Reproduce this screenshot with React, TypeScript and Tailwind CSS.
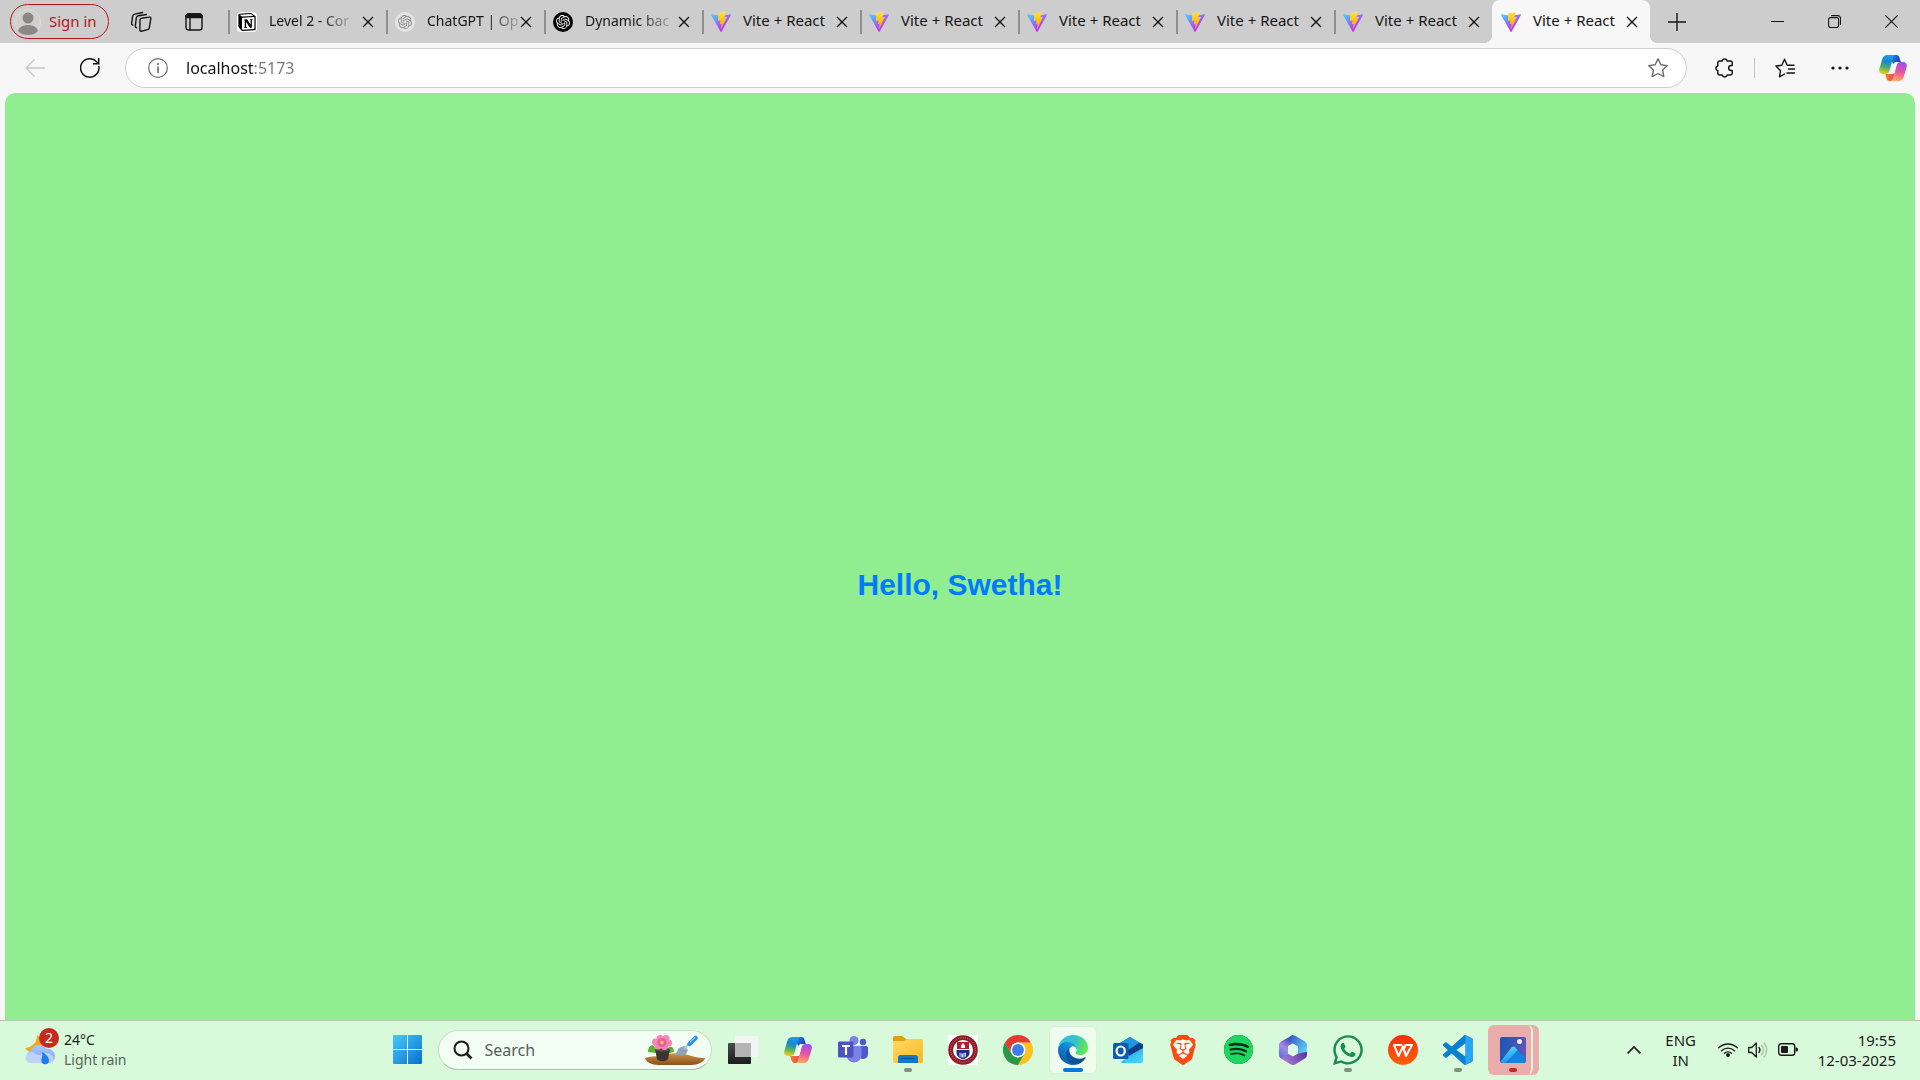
import type { ReactNode } from "react";
import { SiBrave, SiNotion, SiOpenai, SiSpotify } from "react-icons/si";
import { FaWhatsapp } from "react-icons/fa";

function ViteLogo() {
  return (
    <svg viewBox="0 0 256 257" className="size-5 shrink-0" aria-hidden="true">
      <defs>
        <linearGradient id="viteBody" x1="0" x2="0.58" y1="0.08" y2="0.78">
          <stop offset="0" stopColor="#41D1FF" />
          <stop offset="1" stopColor="#BD34FE" />
        </linearGradient>
        <linearGradient id="viteBolt" x1="0.43" x2="0.5" y1="0.02" y2="0.89">
          <stop offset="0" stopColor="#FFEA83" />
          <stop offset="0.08" stopColor="#FFDD35" />
          <stop offset="1" stopColor="#FFA800" />
        </linearGradient>
      </defs>
      <path
        fill="url(#viteBody)"
        d="M255.153 37.938L134.897 252.976c-2.483 4.44-8.862 4.466-11.382.048L.875 37.958c-2.746-4.814 1.371-10.646 6.827-9.67l120.385 21.517a6.537 6.537 0 0 0 2.322-.004l117.867-21.483c5.438-.991 9.574 4.796 6.877 9.62Z"
      />
      <path
        fill="url(#viteBolt)"
        d="M185.432.063L96.44 17.501a3.268 3.268 0 0 0-2.634 3.014l-5.474 92.456a3.268 3.268 0 0 0 3.997 3.378l24.777-5.718c2.318-.535 4.413 1.507 3.936 3.838l-7.361 36.047c-.495 2.426 1.782 4.5 4.151 3.78l15.304-4.649c2.372-.72 4.652 1.36 4.15 3.788l-11.698 56.621c-.732 3.542 3.979 5.473 5.943 2.437l1.313-2.028l72.516-144.72c1.215-2.423-.88-5.186-3.54-4.672l-25.505 4.922c-2.396.462-4.435-1.77-3.759-4.114l16.646-57.705c.677-2.35-1.37-4.583-3.769-4.113Z"
      />
    </svg>
  );
}

function NotionLogo() {
  return (
    <span className="grid size-5 shrink-0 place-items-center rounded-sm bg-white">
      <SiNotion className="size-[18px] text-black" />
    </span>
  );
}

function ChatLogo({ dark }: { dark: boolean }) {
  return dark ? (
    <span className="grid size-5 shrink-0 place-items-center rounded-full bg-black">
      <SiOpenai className="size-[14px] text-white" />
    </span>
  ) : (
    <span className="grid size-5 shrink-0 place-items-center rounded-full bg-[#e4e4e4]">
      <SiOpenai className="size-[14px] text-[#8a8a8a]" />
    </span>
  );
}

function CloseGlyph() {
  return (
    <svg viewBox="0 0 12 12" className="size-3" fill="none" stroke="#111" strokeWidth="1.4" aria-hidden="true">
      <path d="M1 1l10 10M11 1L1 11" />
    </svg>
  );
}

function CopilotLogo() {
  return (
    <svg viewBox="0 0 28 26" className="h-[26px] w-7" aria-hidden="true">
      <defs>
        <linearGradient id="cpLeft" x1="0.5" x2="0.3" y1="0" y2="1">
          <stop offset="0" stopColor="#1b9cf0" />
          <stop offset="0.35" stopColor="#1787cf" />
          <stop offset="0.65" stopColor="#4fae68" />
          <stop offset="1" stopColor="#f5cf0c" />
        </linearGradient>
        <linearGradient id="cpRight" x1="0.6" x2="0.4" y1="0" y2="1">
          <stop offset="0" stopColor="#9b4ff0" />
          <stop offset="0.5" stopColor="#e8559d" />
          <stop offset="1" stopColor="#ffa964" />
        </linearGradient>
        <linearGradient id="cpTop" x1="0" x2="1" y1="0" y2="0.6">
          <stop offset="0" stopColor="#1a8ff0" />
          <stop offset="1" stopColor="#1d3fb8" />
        </linearGradient>
        <linearGradient id="cpBottom" x1="0" x2="1">
          <stop offset="0" stopColor="#f5802c" />
          <stop offset="1" stopColor="#e9484e" />
        </linearGradient>
      </defs>
      <path fill="url(#cpTop)" d="M12 0h5.500c1.700 0 2.500 1 3 2.700L21.800 7H18c-1.800 0-2.600.6-3.200 2L12 6z" />
      <path fill="url(#cpBottom)" d="M16 26h-5.500c-1.700 0-2.500-1-3-2.700L6.200 19H10c1.800 0 2.600-.6 3.200-2L16 20z" />
      <path fill="url(#cpLeft)" d="M8.500 0H17c-1.600 0-2.400 1-3 3l-3.500 12.500C9.800 18 8.800 19 6.500 19H4C1 19-.4 17 .3 14L3.300 4C4 1.500 6 0 8.500 0Z" />
      <path fill="url(#cpRight)" d="M19.500 26H11c1.600 0 2.400-1 3-3l3.500-12.500C18.200 8 19.200 7 21.500 7H24c3 0 4.400 2 3.700 5l-3 10c-.7 2.500-2.700 4-5.200 4Z" />
      <path fill="#f7fbf7" d="M14.800 9c.6-1.500 1.500-2 3.500-2h1.700c-1.300.4-2 1.500-2.500 3.300L15.700 17c-.5 1.500-1.300 2-3 2H9.500c1.500-.3 2.200-1.300 2.700-3z" />
    </svg>
  );
}

function EdgeLogo() {
  return (
    <svg viewBox="0 0 256 256" className="size-[30px]" aria-hidden="true">
      <defs>
        <linearGradient id="edgeA" x1="0" x2="1" y1="0.6" y2="0.6">
          <stop offset="0" stopColor="#0c59a4" />
          <stop offset="1" stopColor="#114a8b" />
        </linearGradient>
        <linearGradient id="edgeB" x1="0.8" x2="0.3" y1="0.2" y2="0.95">
          <stop offset="0" stopColor="#1b9de2" />
          <stop offset="0.5" stopColor="#0f78c8" />
          <stop offset="1" stopColor="#0a5aa8" />
        </linearGradient>
        <linearGradient id="edgeC" x1="0" x2="1" y1="0.3" y2="0.6">
          <stop offset="0" stopColor="#35c1f1" />
          <stop offset="0.5" stopColor="#34c1c8" />
          <stop offset="1" stopColor="#66eb4a" />
        </linearGradient>
      </defs>
      <g transform="translate(-4.630 -4.920)">
        <path fill="url(#edgeA)" d="M235.68 195.46a93.73 93.73 0 0 1-10.54 4.71 101.87 101.87 0 0 1-35.9 6.46c-47.32 0-88.54-32.55-88.54-74.32A31.48 31.48 0 0 1 117.13 105c-42.8 1.8-53.8 46.4-53.8 72.53 0 73.88 68.09 81.37 82.76 81.37 7.91 0 19.84-2.300 27-4.560l1.310-.44a128.34 128.34 0 0 0 66.6-52.8 4 4 0 0 0-5.320-5.640z" />
        <path fill="url(#edgeB)" d="M110.34 246.34A79.2 79.2 0 0 1 87.6 225a80.72 80.72 0 0 1 29.53-120c3.120-1.470 8.450-4.130 15.54-4a32.35 32.35 0 0 1 25.69 13 31.88 31.88 0 0 1 6.360 18.66c0-.21 24.46-79.6-80-79.6-43.9 0-80 41.66-80 78.21a130.15 130.15 0 0 0 12.11 56 128 128 0 0 0 156.38 67.11 75.55 75.55 0 0 1-62.78-8z" />
        <path fill="url(#edgeC)" d="M156.94 153.78c-.81 1.050-3.300 2.500-3.300 5.660 0 2.610 1.700 5.120 4.720 7.230 14.38 10 41.49 8.680 41.56 8.680a59.56 59.56 0 0 0 30.27-8.350 61.38 61.38 0 0 0 30.43-52.88c.26-22.41-8-37.31-11.34-43.91C228.09 28.76 182.35 4.920 132.61 4.920a128 128 0 0 0-128 126.2c.48-36.54 36.8-66.05 80-66.05 3.500 0 23.46.34 42 10.07 16.34 8.580 24.9 18.94 30.85 29.21 6.180 10.67 7.280 24.15 7.280 29.52s-2.740 13.33-7.800 19.91z" />
      </g>
    </svg>
  );
}

function TaskViewLogo() {
  return (
    <svg viewBox="0 0 30 28" className="h-7 w-[30px]" aria-hidden="true">
      <defs>
        <linearGradient id="tvDark" x1="0" x2="0" y1="0" y2="1">
          <stop offset="0" stopColor="#4a4a4a" />
          <stop offset="1" stopColor="#1c1c1c" />
        </linearGradient>
      </defs>
      <rect x="0" y="7" width="23" height="21" rx="1" fill="url(#tvDark)" />
      <rect x="7" y="0" width="23" height="21" rx="1" fill="#f4f4f4" opacity="0.95" />
      <path d="M7 7h16v14H8a1 1 0 0 1-1-1z" fill="#b4b4b4" />
    </svg>
  );
}

function TeamsLogo() {
  return (
    <svg viewBox="0 0 30 27" className="h-[27px] w-[30px]" aria-hidden="true">
      <circle cx="25" cy="6" r="3.200" fill="#5059c9" />
      <path d="M20 10h8.500A1.500 1.500 0 0 1 30 11.500v6.500a5 5 0 0 1-9 3z" fill="#5059c9" />
      <circle cx="16" cy="4.500" r="4.500" fill="#7b83eb" />
      <path d="M9 10h13a1.500 1.500 0 0 1 1.500 1.500V19a7.500 7.500 0 0 1-15 0z" fill="#7b83eb" />
      <rect y="5.500" width="15.500" height="16" rx="1.500" fill="#4b53bc" />
      <path d="M4 9h8v2H9.100v8H6.900v-8H4z" fill="#fff" />
    </svg>
  );
}

function FolderLogo() {
  return (
    <svg viewBox="0 0 30 27" className="h-[27px] w-[30px]" aria-hidden="true">
      <defs>
        <linearGradient id="folder" x1="0" x2="1" y1="0" y2="1">
          <stop offset="0" stopColor="#ffd968" />
          <stop offset="1" stopColor="#fbb91e" />
        </linearGradient>
      </defs>
      <path d="M0 1.500A1.500 1.500 0 0 1 1.500 0H9l4 3h15v7H0z" fill="#e0a10c" />
      <path d="M0 5h11l3-2h14.500A1.500 1.500 0 0 1 30 4.500v21a1.500 1.500 0 0 1-1.500 1.500h-27A1.500 1.500 0 0 1 0 25.500z" fill="url(#folder)" />
      <path d="M5 27v-5.500A2.500 2.500 0 0 1 7.500 19h15a2.500 2.500 0 0 1 2.500 2.500V27z" fill="#1379cf" />
      <path d="M8.500 22.500h13" stroke="#0b4f91" strokeWidth="1.200" />
    </svg>
  );
}

function CollegeLogo() {
  return (
    <svg viewBox="0 0 30 30" className="size-[30px]" aria-hidden="true">
      <rect width="30" height="30" fill="#fff" />
      <circle cx="15" cy="15" r="14.800" fill="#8e1b25" />
      <circle cx="15" cy="15" r="12.300" fill="none" stroke="#c98388" strokeWidth="1" strokeDasharray="1 1.200" />
      <circle cx="15" cy="15" r="10" fill="#fff" />
      <path d="M9 7h12v8H9z" fill="#b3202c" />
      <path d="M8.500 15h13v3c0 3.500-3.500 5-6.500 6.500-3-1.500-6.500-3-6.500-6.500z" fill="#1f2b87" />
      <path d="M15 8l2 2.500v2.500h-4v-2.500z" fill="#fff" />
      <path d="M8 14h14v1H8z" fill="#fff" />
      <path d="M11.500 17.500l3 1 3.500-1v4l-3.200 1.200-3.300-1.200z" fill="#fff" opacity="0.800" />
      <path d="M13 18v4M16 18.500v4" stroke="#1f2b87" strokeWidth="0.800" />
    </svg>
  );
}

function ChromeLogo() {
  return (
    <svg viewBox="0 0 48 48" className="size-[30px]" aria-hidden="true">
      <path d="M24 12h20.785A24 24 0 0 1 24 48l10.392-18z" fill="#fcc31e" />
      <path d="M3.215 12A24 24 0 0 0 24 48l10.392-18H24L13.608 30z" fill="#2a9947" />
      <path d="M3.215 12A24 24 0 0 1 44.785 12H24A12 12 0 0 0 13.608 18l-4 4z" fill="#e33b2e" />
      <path d="M3.215 12L13.608 30 20 20z" fill="#e33b2e" />
      <circle cx="24" cy="24" r="12" fill="#fff" />
      <circle cx="24" cy="24" r="9.500" fill="#3f7ee8" />
    </svg>
  );
}

function OutlookLogo() {
  return (
    <svg viewBox="0 0 30 26" className="h-[26px] w-[30px]" aria-hidden="true">
      <defs>
        <linearGradient id="olFront" x1="0" x2="1" y1="0" y2="1">
          <stop offset="0" stopColor="#1a8fe0" />
          <stop offset="1" stopColor="#4fe0fb" />
        </linearGradient>
      </defs>
      <path d="M5 7L16 .4a2 2 0 0 1 2 0L29 7v5l-12 7L5 12z" fill="#0f6cc4" />
      <path d="M8 6l9-5.600L28.500 7 17 13z" fill="#2295e3" />
      <path d="M29.500 7.500L12 19v-4L26 6z" fill="#0a3f86" />
      <path d="M30 9v14.500a2.500 2.500 0 0 1-2.500 2.500H10a3 3 0 0 1-2-1z" fill="url(#olFront)" />
      <path d="M12 20l18 4a2.500 2.500 0 0 1-2.500 2H12z" fill="#3fd0f5" opacity="0.700" />
      <path d="M30 7.500v3.500L15.500 19v-4L26.500 6z" fill="#0a3f86" />
      <rect y="6" width="15.500" height="16" rx="1.500" fill="#0d5cad" />
      <ellipse cx="7.700" cy="14" rx="4.100" ry="4.500" fill="none" stroke="#fff" strokeWidth="2.200" />
    </svg>
  );
}

function BraveLogo() {
  return (
    <span className="grid size-[30px] place-items-center">
      <span className="col-start-1 row-start-1 h-5 w-4 rounded-lg bg-white" />
      <SiBrave className="col-start-1 row-start-1 size-[30px] text-[#fb4a14]" />
    </span>
  );
}

function SpotifyLogo() {
  return (
    <span className="grid size-[29px] place-items-center rounded-full bg-[#0c2b16]">
      <SiSpotify className="size-[29px] text-[#1ed760]" />
    </span>
  );
}

function OfficeLogo() {
  return (
    <svg viewBox="0 0 28 30" className="h-[30px] w-7" aria-hidden="true">
      <defs>
        <linearGradient id="m365a" x1="0.6" x2="0.2" y1="0" y2="1">
          <stop offset="0" stopColor="#3a3fb0" />
          <stop offset="0.5" stopColor="#a48ce8" />
          <stop offset="1" stopColor="#5a66d8" />
        </linearGradient>
        <linearGradient id="m365b" x1="0" x2="1" y1="0" y2="0.7">
          <stop offset="0" stopColor="#2f4fc0" />
          <stop offset="1" stopColor="#5ed0fa" />
        </linearGradient>
        <linearGradient id="m365c" x1="0" x2="1" y1="0.6" y2="0.2">
          <stop offset="0" stopColor="#b07fdc" />
          <stop offset="1" stopColor="#58369c" />
        </linearGradient>
      </defs>
      <path d="M14 0L2 6.500A4 4 0 0 0 0 10v10a4 4 0 0 0 2 3.500l4 2 3-6.500V11l5-3z" fill="url(#m365a)" />
      <path d="M11 1.200a6 6 0 0 1 6 0L26 6.500A4 4 0 0 1 28 10v10l-9-1.500V11.500L9.500 6z" fill="url(#m365b)" />
      <path d="M28 17v3a4 4 0 0 1-2 3.500l-9.500 5.800a5 5 0 0 1-5 0L2 23.500l7.500-4.500 4.500 2.500 5-3z" fill="url(#m365c)" />
      <circle cx="14" cy="15" r="5" fill="#dcfade" />
    </svg>
  );
}

function WpsLogo() {
  return (
    <svg viewBox="0 0 30 30" className="size-[30px]" aria-hidden="true">
      <defs>
        <linearGradient id="wps" x1="0" x2="0" y1="0" y2="1">
          <stop offset="0" stopColor="#fb2a12" />
          <stop offset="1" stopColor="#ff6208" />
        </linearGradient>
      </defs>
      <circle cx="15" cy="15" r="15" fill="url(#wps)" />
      <path d="M6 10h7.500M6 10l4.500 11L15 11.500 18 21l6-11h-6.500M17.500 10l-.8 2.500" fill="none" stroke="#fff" strokeWidth="2" strokeLinejoin="round" strokeLinecap="round" />
    </svg>
  );
}

function CodeLogo() {
  return (
    <svg viewBox="0 0 24 24" className="size-[30px]" aria-hidden="true">
      <path
        fill="#0a7fd0"
        d="M23.15 2.587L18.21.21a1.494 1.494 0 0 0-1.705.29l-9.460 8.630-4.120-3.128a.999.999 0 0 0-1.276.057L.327 7.261A1 1 0 0 0 .326 8.740L3.899 12 .326 15.26a1 1 0 0 0 .001 1.479L1.650 17.940a.999.999 0 0 0 1.276.057l4.120-3.128 9.460 8.630a1.492 1.492 0 0 0 1.704.290l4.942-2.377A1.500 1.500 0 0 0 24 20.060V3.939a1.500 1.500 0 0 0-.850-1.352zm-5.146 14.861L10.826 12l7.178-5.448v10.896z"
      />
      <path fill="#2aa5f4" d="M18 .12L23.15 2.587A1.500 1.500 0 0 1 24 3.939V20.060a1.500 1.500 0 0 1-.850 1.352L18 23.880z" />
    </svg>
  );
}

function PhotosLogo() {
  return (
    <svg viewBox="0 0 26 26" className="size-[26px]" aria-hidden="true">
      <defs>
        <linearGradient id="phSky" x1="0" x2="1" y1="0.3" y2="0.6">
          <stop offset="0" stopColor="#1b57b4" />
          <stop offset="1" stopColor="#6355b8" />
        </linearGradient>
        <linearGradient id="phHill" x1="0.3" x2="0.6" y1="0" y2="1">
          <stop offset="0" stopColor="#58dcfb" />
          <stop offset="1" stopColor="#1590e8" />
        </linearGradient>
      </defs>
      <rect width="26" height="26" rx="2" fill="url(#phSky)" />
      <path d="M14 9.500L25.500 21v3a2 2 0 0 1-2 2H8z" fill="#1483dd" />
      <path d="M1 24L11.500 10.500a2.600 2.600 0 0 1 4 0L17.500 13 6 26H2a2 2 0 0 1-1-2z" fill="url(#phHill)" />
      <circle cx="19.500" cy="4.500" r="2.500" fill="#f4eef8" />
    </svg>
  );
}

function GardenArt() {
  return (
    <svg viewBox="0 0 60 30" className="h-[30px] w-[60px] shrink-0" aria-hidden="true">
      <defs>
        <linearGradient id="soil" x1="0" x2="0" y1="0" y2="1">
          <stop offset="0" stopColor="#cf9149" />
          <stop offset="1" stopColor="#8a5218" />
        </linearGradient>
      </defs>
      <path d="M0 23c5-2 10-1 15-2.500 8-1 12-3 20-2 8 0 14 5 25 4.500-1 4-7 7-14 7H14C6 30 1 27 0 23z" fill="url(#soil)" />
      <path d="M3 17c0-4 2-7 5-7 2 2 4 5 3 8zM29 17c0-4-2-6-5-5-2 2-4 4-3 7z" fill="#58b52e" />
      <path d="M10 14h15l-2 10c-2 3-9 3-11 0z" fill="#3d3434" />
      <ellipse cx="17.500" cy="14.500" rx="7.500" ry="2.200" fill="#5a4a4a" />
      <g fill="#f585b6">
        <circle cx="10.500" cy="7" r="3.500" />
        <circle cx="15" cy="3.500" r="3.500" />
        <circle cx="21" cy="3.500" r="3.500" />
        <circle cx="23.500" cy="8" r="3.500" />
        <circle cx="19.500" cy="11.500" r="3.500" />
        <circle cx="13" cy="11" r="3.500" />
      </g>
      <circle cx="17" cy="7.500" r="4.500" fill="#e8609a" />
      <circle cx="17" cy="7.500" r="1.800" fill="#f8c95a" />
      <path d="M34 13l5-2 4 4-2 4c-4 2-8 1-11 1 2-2 2-5 4-7z" fill="#8fa3b8" />
      <path d="M39 14l5-5" stroke="#aebccb" strokeWidth="1.800" />
      <path d="M44.500 9l6-6" stroke="#2d8fe6" strokeWidth="4.500" strokeLinecap="round" />
      <path d="M45 7l5-4.500" stroke="#7cc4fa" strokeWidth="1.200" strokeLinecap="round" />
    </svg>
  );
}

type Tab = { title: string; icon: ReactNode; fade?: boolean };

const tabs: Tab[] = [
  { title: "Level 2 - Cor", icon: <NotionLogo />, fade: true },
  { title: "ChatGPT | Op", icon: <ChatLogo dark={false} />, fade: true },
  { title: "Dynamic bac", icon: <ChatLogo dark />, fade: true },
  { title: "Vite + React", icon: <ViteLogo /> },
  { title: "Vite + React", icon: <ViteLogo /> },
  { title: "Vite + React", icon: <ViteLogo /> },
  { title: "Vite + React", icon: <ViteLogo /> },
  { title: "Vite + React", icon: <ViteLogo /> },
  { title: "Vite + React", icon: <ViteLogo /> },
];

function TabItem({ tab, active }: { tab: Tab; active: boolean }) {
  return (
    <div
      className={
        active
          ? "relative flex h-full w-[158px] items-center rounded-t-lg bg-[#f7f7f7]"
          : "flex h-full w-[158px] items-center"
      }
    >
      {active ? (
        <>
          <span className="absolute bottom-0 -left-2 size-2 bg-[radial-gradient(circle_at_0_0,#cdcdcd_8px,#f7f7f7_8px)]" />
          <span className="absolute -right-2 bottom-0 size-2 bg-[radial-gradient(circle_at_100%_0,#cdcdcd_8px,#f7f7f7_8px)]" />
        </>
      ) : (
        <span className="-mr-0.5 h-6 w-0.5 bg-[#8f8f8f]" />
      )}
      <button
        type="button"
        role="tab"
        aria-selected={active}
        className="ml-[9px] flex h-full min-w-0 flex-1 items-center gap-3 text-left text-[#151515]"
      >
        {tab.icon}
        <span
          className={
            tab.fade
              ? "-mt-0.5 text-sm whitespace-nowrap [mask-image:linear-gradient(to_right,black_65%,#0003)]"
              : "-mt-0.5 text-[15px] whitespace-nowrap"
          }
        >
          {tab.title}
        </span>
      </button>
      <button type="button" aria-label="Close tab" className="mr-1 grid h-6 w-7 place-items-center">
        <CloseGlyph />
      </button>
    </div>
  );
}

function TabStrip() {
  return (
    <div className="flex h-[43px] items-center bg-[#cdcdcd]">
      <button
        type="button"
        className="ml-2.5 flex h-[35px] w-[99px] items-center gap-2 rounded-full border border-[#b5161d] pl-1 text-[15px] text-[#b5161d]"
      >
        <svg viewBox="0 0 26 26" className="size-[26px]" aria-hidden="true">
          <circle cx="13" cy="13" r="12.500" fill="#d2d0ce" stroke="#dedcda" />
          <circle cx="13" cy="9" r="5.500" fill="#8a8886" />
          <path d="M3 22c1-4 5-6 10-6s9 2 10 6c-3 3-6 4-10 4s-7-1-10-4z" fill="#8a8886" />
        </svg>
        <span className="whitespace-nowrap">Sign in</span>
      </button>
      <button type="button" aria-label="Workspaces" className="ml-[11px] grid size-[42px] place-items-center">
        <svg viewBox="0 0 22 22" className="size-[22px]" fill="none" stroke="#151515" strokeWidth="1.400" strokeLinejoin="round" strokeLinecap="round" aria-hidden="true">
          <path d="M11.500 7.300l7.800-1.200a1.300 1.300 0 0 1 1.500 1.700l-1.600 9.400a2 2 0 0 1-1.600 1.400l-6.200 1.600a1.300 1.300 0 0 1-1.500-1.700l.1-9.600a1.900 1.900 0 0 1 1.500-1.600z" />
          <path d="M6.500 16.800c-.9-.2-1.400-.9-1.200-1.900L6.300 7c.2-1.300.8-2 2-2.200l8-1.300" />
          <path d="M2.800 14c-.9-.2-1.400-.9-1.200-1.900l1-6.800c.2-1.300.8-2 2-2.200l8-1.600" />
        </svg>
      </button>
      <button type="button" aria-label="Tab actions" className="ml-[11px] grid size-[42px] place-items-center">
        <svg viewBox="0 0 18 18" className="size-[18px]" fill="none" stroke="#151515" strokeWidth="1.400" aria-hidden="true">
          <rect x="1" y="1" width="16" height="16" rx="2.500" />
          <path d="M1 3.500A2.500 2.500 0 0 1 3.500 1h11A2.500 2.500 0 0 1 17 3.500V4.500H1z" fill="#151515" />
          <path d="M5 5v12" />
        </svg>
      </button>
      <div role="tablist" aria-label="Open tabs" className="ml-[13px] flex h-full">
        {tabs.map((tab, i) => (
          <TabItem key={i} tab={tab} active={i === tabs.length - 1} />
        ))}
      </div>
      <button type="button" aria-label="New tab" className="ml-[7px] grid size-10 place-items-center">
        <svg viewBox="0 0 18 18" className="size-[18px]" stroke="#151515" strokeWidth="1.400" aria-hidden="true">
          <path d="M9 0v18M0 9h18" />
        </svg>
      </button>
      <div className="ml-auto flex h-full">
        <button type="button" aria-label="Minimize" className="grid w-[57px] place-items-center">
          <svg viewBox="0 0 13 13" className="size-[13px]" stroke="#151515" aria-hidden="true">
            <path d="M0 6.500h13" />
          </svg>
        </button>
        <button type="button" aria-label="Restore" className="grid w-[57px] place-items-center">
          <svg viewBox="0 0 13 13" className="size-[13px]" fill="none" stroke="#151515" strokeWidth="1.100" aria-hidden="true">
            <rect x=".6" y="2.600" width="10" height="10" rx="2" />
            <path d="M3 .6h6.800a2.700 2.700 0 0 1 2.700 2.700V10" />
          </svg>
        </button>
        <button type="button" aria-label="Close window" className="grid w-[57px] place-items-center">
          <svg viewBox="0 0 13 13" className="size-[13px]" stroke="#151515" strokeWidth="1.100" aria-hidden="true">
            <path d="M0 0l13 13M13 0L0 13" />
          </svg>
        </button>
      </div>
    </div>
  );
}

function Toolbar() {
  return (
    <div className="flex h-[50px] items-center bg-[#f7f7f7]">
      <button type="button" aria-label="Back" disabled className="ml-[15px] grid size-10 place-items-center">
        <svg viewBox="0 0 20 18" className="h-[18px] w-5" fill="none" stroke="#c6c6c6" strokeWidth="1.300" aria-hidden="true">
          <path d="M20 9H1M9.500 .500L1 9l8.500 8.500" />
        </svg>
      </button>
      <button type="button" aria-label="Refresh" className="ml-[15px] grid size-10 place-items-center">
        <svg viewBox="0 0 20 20" className="size-5" fill="none" stroke="#151515" strokeWidth="1.500" aria-hidden="true">
          <path d="M18.800 8A9.200 9.200 0 1 1 15.500 2.700L18.500 5.500M18.700 0v5.800H13" />
        </svg>
      </button>
      <div className="ml-[15px] flex h-10 min-w-0 flex-1 items-center rounded-full border border-[#cfcfcf] bg-white">
        <button type="button" aria-label="Site information" className="ml-3 grid size-10 place-items-center">
          <svg viewBox="0 0 20 20" className="size-5" fill="none" stroke="#6b6b6b" strokeWidth="1.200" aria-hidden="true">
            <circle cx="10" cy="10" r="9.300" />
            <path d="M10 8.500V15M10 5v2" strokeWidth="1.600" />
          </svg>
        </button>
        <input
          type="text"
          aria-label="Address"
          defaultValue="localhost:5173"
          className="ml-2 min-w-0 flex-1 bg-[linear-gradient(to_right,#111_68px,#757575_68px)] bg-clip-text text-base text-transparent outline-none"
        />
        <button type="button" aria-label="Add to favorites" className="mr-2 grid size-10 place-items-center">
          <svg viewBox="0 0 24 24" className="size-6" fill="none" stroke="#6b6b6b" strokeWidth="1.400" strokeLinejoin="round" aria-hidden="true">
            <path d="M12 2.800l2.850 5.900 6.500.9-4.700 4.500 1.150 6.500L12 17.500l-5.800 3.100 1.150-6.500-4.700-4.500 6.500-.9z" />
          </svg>
        </button>
      </div>
      <button type="button" aria-label="Extensions" className="ml-[17px] grid size-10 place-items-center">
        <svg viewBox="0 0 20 20" className="size-5" fill="none" stroke="#151515" strokeWidth="1.500" strokeLinejoin="round" aria-hidden="true">
          <path d="M5.500 3h2.700a2.600 2.600 0 0 1 5 0h3.300a1.700 1.700 0 0 1 1.700 1.700v2.800h-1a2.500 2.500 0 0 0 0 5h1v2.800a1.700 1.700 0 0 1-1.700 1.700h-3.300a2.600 2.600 0 0 1-5 0H5.500a1.700 1.700 0 0 1-1.700-1.700v-2.600a2.600 2.600 0 0 1 0-5V4.700A1.700 1.700 0 0 1 5.500 3z" />
        </svg>
      </button>
      <span className="ml-2.5 h-5 w-px bg-[#c4c4c4]" />
      <button type="button" aria-label="Favorites" className="ml-2.5 grid size-10 place-items-center">
        <svg viewBox="0 0 20 20" className="size-5" fill="none" stroke="#151515" strokeWidth="1.400" strokeLinejoin="round" strokeLinecap="round" aria-hidden="true">
          <path d="M9.500 16L4.500 18.800l1-6.100L1 8l5.800-.8L9.500 1.200l2.700 6h6.800M13.500 11h6M12 15h7.500" />
        </svg>
      </button>
      <button type="button" aria-label="Settings and more" className="ml-[15px] grid size-10 place-items-center">
        <svg viewBox="0 0 18 4" className="h-1 w-[18px]" fill="#151515" aria-hidden="true">
          <circle cx="2" cy="2" r="1.600" />
          <circle cx="9" cy="2" r="1.600" />
          <circle cx="16" cy="2" r="1.600" />
        </svg>
      </button>
      <button type="button" aria-label="Copilot" className="mr-[7px] ml-[13px] grid size-10 place-items-center">
        <CopilotLogo />
      </button>
    </div>
  );
}

type App = { name: string; icon: ReactNode; state?: "open" | "active" | "alert" };

const apps: App[] = [
  { name: "Task view", icon: <TaskViewLogo /> },
  { name: "Copilot", icon: <CopilotLogo /> },
  { name: "Teams", icon: <TeamsLogo /> },
  { name: "File Explorer", icon: <FolderLogo />, state: "open" },
  { name: "College portal", icon: <CollegeLogo /> },
  { name: "Chrome", icon: <ChromeLogo /> },
  { name: "Edge", icon: <EdgeLogo />, state: "active" },
  { name: "Outlook", icon: <OutlookLogo /> },
  { name: "Brave", icon: <BraveLogo /> },
  { name: "Spotify", icon: <SpotifyLogo /> },
  { name: "Microsoft 365", icon: <OfficeLogo /> },
  { name: "WhatsApp", icon: <FaWhatsapp className="size-[34px] text-[#1d8a55]" />, state: "open" },
  { name: "WPS Office", icon: <WpsLogo /> },
  { name: "Visual Studio Code", icon: <CodeLogo />, state: "open" },
  { name: "Photos", icon: <PhotosLogo />, state: "alert" },
];

function AppButton({ app }: { app: App }) {
  return (
    <button type="button" aria-label={app.name} className="relative grid h-full w-[55px] place-items-center">
      {app.state === "active" && (
        <span className="absolute size-12 rounded-md border border-[#dcefdc] bg-[#edfced]" />
      )}
      {app.state === "alert" && (
        <>
          <span className="absolute right-0.5 h-[50px] w-5 rounded-md bg-[#e9aeab]" />
          <span className="absolute left-0.5 h-[50px] w-[45px] rounded-md border-r-2 border-r-[#e3f4dc] bg-[#e9aeab] bg-clip-padding" />
        </>
      )}
      <span className="relative">{app.icon}</span>
      {app.state === "open" && <span className="absolute bottom-1.5 h-1 w-2 rounded-full bg-[#7d917d]" />}
      {app.state === "active" && <span className="absolute bottom-1.5 h-1 w-5 rounded-full bg-[#0a78d6]" />}
      {app.state === "alert" && <span className="absolute bottom-1.5 h-1 w-2 rounded-full bg-[#c42b1c]" />}
    </button>
  );
}

function StartLogo() {
  return (
    <svg viewBox="0 0 29 29" className="size-[29px]" aria-hidden="true">
      <defs>
        <linearGradient id="win" x1="0" x2="1" y1="0" y2="1" gradientUnits="objectBoundingBox">
          <stop offset="0" stopColor="#4cc8fb" />
          <stop offset="1" stopColor="#0670cf" />
        </linearGradient>
      </defs>
      <path
        fill="url(#win)"
        d="M1 0h13v14H0V1a1 1 0 0 1 1-1zM15 0h13a1 1 0 0 1 1 1v13H15zM0 15h14v14H1a1 1 0 0 1-1-1zM15 15h14v13a1 1 0 0 1-1 1H15z"
      />
    </svg>
  );
}

function Weather() {
  return (
    <button type="button" className="ml-6 flex h-full items-center gap-[9px] text-left">
      <span className="relative">
        <svg viewBox="0 0 31 31" className="size-[31px]" aria-hidden="true">
          <defs>
            <linearGradient id="cloud" x1="0" x2="0" y1="0" y2="1">
              <stop offset="0" stopColor="#a9c6fa" />
              <stop offset="1" stopColor="#7fa4ea" />
            </linearGradient>
          </defs>
          <path d="M13 1c0 7-4 12-12 13 3 5 10 6 15 2s5-11-3-15z" fill="#f6a623" />
          <path d="M7 29a6.500 6.500 0 0 1-.5-12A9 9 0 0 1 22 14.500 8 8 0 0 1 31 22a7 7 0 0 1-7 7z" fill="url(#cloud)" />
          <path d="M7 29a5.500 5.500 0 0 1 0-11c4 0 5 3 8 3s4-2 7-2 7 2 7.500 5-3 5-6.500 5z" fill="#bdd1fa" />
          <path d="M18 18c4 2 7 5 7 8.500a3.800 3.800 0 0 1-7.600 0c0-3 1.600-4 .6-8.500z" fill="#1a7df0" />
        </svg>
        <span className="absolute -top-1.5 -right-1 grid size-5 place-items-center rounded-full bg-[#c42b1c] text-sm leading-5 text-white">
          2
        </span>
      </span>
      <span className="flex flex-col text-sm leading-5">
        <span className="text-[#1a1a1a]">24°C</span>
        <span className="text-[#56655a]">Light rain</span>
      </span>
    </button>
  );
}

function Tray() {
  return (
    <div className="flex h-full items-center text-[15px] leading-5 text-[#1a1a1a]">
      <button type="button" aria-label="Show hidden icons" className="grid size-8 place-items-center">
        <svg viewBox="0 0 14 8" className="h-2 w-3.5" fill="none" stroke="#1a1a1a" strokeWidth="1.600" aria-hidden="true">
          <path d="M.6 7.400L7 1l6.400 6.400" />
        </svg>
      </button>
      <button type="button" className="ml-[7px] w-12 text-center">
        ENG
        <br />
        IN
      </button>
      <button type="button" aria-label="Network, volume and battery" className="ml-[13px] flex items-center gap-2.5">
        <svg viewBox="0 0 20 15" className="h-[15px] w-5" fill="none" stroke="#1a1a1a" strokeWidth="1.300" strokeLinecap="round" aria-hidden="true">
          <path d="M.8 5.800a13 13 0 0 1 18.400 0M3.600 8.700a9 9 0 0 1 12.800 0M6.400 11.300a5.200 5.200 0 0 1 7.200 0" />
          <circle cx="10" cy="13" r="1.300" fill="#1a1a1a" />
        </svg>
        <svg viewBox="0 0 20 16" className="h-4 w-5" fill="none" stroke="#1a1a1a" strokeWidth="1.300" strokeLinecap="round" strokeLinejoin="round" aria-hidden="true">
          <path d="M.7 5.500v5h3L8.300 15V1L3.700 5.500z" />
          <path d="M11 5.500a4 4 0 0 1 0 5" />
          <path d="M13.500 3.200a7 7 0 0 1 0 9.600M16 1a10.500 10.500 0 0 1 0 14" stroke="#a3bda5" />
        </svg>
        <svg viewBox="0 0 20 13" className="h-[13px] w-5" fill="none" stroke="#1a1a1a" strokeWidth="1.400" aria-hidden="true">
          <rect x=".7" y=".7" width="16" height="11.600" rx="2.500" />
          <rect x="3" y="3" width="7" height="7" rx="1" fill="#1a1a1a" stroke="none" />
          <path d="M17.500 4.500h1A1.500 1.500 0 0 1 20 6v1a1.500 1.500 0 0 1-1.500 1.500h-1z" fill="#1a1a1a" stroke="none" />
        </svg>
      </button>
      <button type="button" className="mr-6 ml-5 text-right whitespace-nowrap">
        19:55
        <br />
        12-03-2025
      </button>
    </div>
  );
}

function Taskbar() {
  return (
    <footer className="flex h-[60px] items-center border-t border-[#b2c4b2] bg-[#d8fadb] pb-0.5">
      <div className="flex h-full flex-1">
        <Weather />
      </div>
      <div className="flex h-full items-center">
        <button type="button" aria-label="Start" className="grid h-full w-[55px] place-items-center">
          <StartLogo />
        </button>
        <div className="mr-1 ml-[3px] flex h-10 w-[274px] items-center rounded-full border border-[#c6e3c8] border-b-[#a9c2ab] bg-[#f2fdf3] pr-1.5 pl-3.5">
          <svg viewBox="0 0 20 20" className="size-5 shrink-0" fill="none" stroke="#1a1a1a" strokeWidth="2" aria-hidden="true">
            <circle cx="8.500" cy="8.500" r="7" />
            <path d="M13.500 13.500l5 5" strokeWidth="2.600" />
          </svg>
          <input
            type="search"
            aria-label="Search"
            placeholder="Search"
            className="ml-3 min-w-0 flex-1 bg-transparent text-base outline-none placeholder:text-[#56605a]"
          />
          <GardenArt />
        </div>
        {apps.map((app) => (
          <AppButton key={app.name} app={app} />
        ))}
      </div>
      <div className="flex h-full flex-1 justify-end">
        <Tray />
      </div>
    </footer>
  );
}

export default function App() {
  return (
    <div className="flex min-h-screen flex-col bg-[#f7f7f7] font-['Noto_Sans',sans-serif]">
      <header>
        <TabStrip />
        <Toolbar />
      </header>
      <main className="mx-[5px] flex flex-1 items-center justify-center rounded-t-[10px] bg-[#90ee90] pt-14">
        <h1 className="font-['Liberation_Sans',sans-serif] text-3xl font-bold text-[#007bff]">Hello, Swetha!</h1>
      </main>
      <Taskbar />
    </div>
  );
}
